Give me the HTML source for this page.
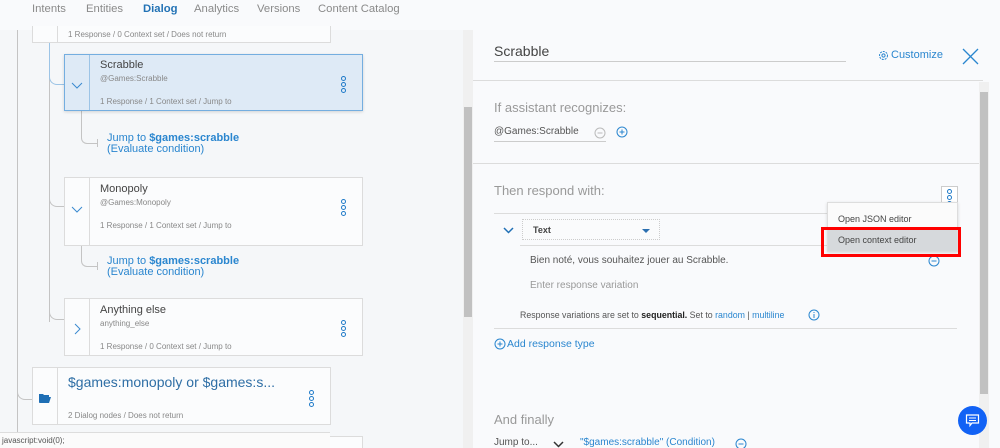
<!DOCTYPE html>
<html style="width:1000px;height:448px;overflow:hidden"><head><meta charset="utf-8"><style>
*{margin:0;padding:0;box-sizing:border-box}
body{width:1000px;height:448px;overflow:hidden;background:#f9fafc;font-family:"Liberation Sans",sans-serif;position:relative;color:#333}
.a{position:absolute;white-space:nowrap}
.tab{position:absolute;top:3px;font-size:11.3px;color:#8a8a8a}
.card{position:absolute;background:#fbfcfd;border:1px solid #dcdcdc}
.card .div{position:absolute;left:24px;top:0;bottom:0;border-left:1px solid #dcdcdc}
.t{position:absolute;left:35px;font-size:11px;color:#444}
.s{position:absolute;left:35px;font-size:8px;color:#888}
.dots{position:absolute;width:6px}
.dots i{display:block;width:5px;height:5px;border:1.3px solid #1f7ac8;border-radius:50%;margin-bottom:1px}
.ln{position:absolute;border-color:#c4c4c4;border-style:solid;border-width:0}
.jump{position:absolute;left:107px;font-size:11px;color:#2a86cf;line-height:11px}
</style></head><body>
<div class="a" style="left:0;top:30px;width:463px;height:418px;background:#f5f7f9"></div>
<div class="a" style="left:463px;top:30px;width:10px;height:418px;background:#f0f0f0"></div>
<div class="a" style="left:464px;top:107px;width:8px;height:210px;background:#c1c1c1"></div>
<div class="a" style="left:0;top:0;width:1000px;height:30px;background:#f9fafc"></div>
<div class="tab" style="left:32px">Intents</div>
<div class="tab" style="left:86px">Entities</div>
<div class="tab" style="left:143px;color:#2272b5;font-weight:bold">Dialog</div>
<div class="tab" style="left:194px">Analytics</div>
<div class="tab" style="left:257px">Versions</div>
<div class="tab" style="left:318px">Content Catalog</div>
<div class="a" style="left:142px;top:28px;width:31px;height:2px;background:#2a86cf"></div>

<div class="ln" style="left:17px;top:30px;height:418px;border-left-width:1px"></div>
<div class="ln" style="left:17px;top:380px;width:15px;height:20px;border-left-width:1px;border-bottom-width:1px;border-bottom-left-radius:8px"></div>
<div class="ln" style="left:49px;top:42px;height:280px;border-left-width:1px"></div>
<div class="ln" style="left:49px;top:42px;width:15px;height:43px;border-left-width:1px;border-bottom-width:1px;border-color:#9cc4e6;border-bottom-left-radius:8px"></div>
<div class="ln" style="left:49px;top:180px;width:15px;height:27px;border-left-width:1px;border-bottom-width:1px;border-bottom-left-radius:8px"></div>
<div class="ln" style="left:49px;top:300px;width:15px;height:20px;border-left-width:1px;border-bottom-width:1px;border-bottom-left-radius:8px"></div>
<div class="ln" style="left:81px;top:111px;width:16px;height:33px;border-left-width:1px;border-bottom-width:1px;border-bottom-left-radius:6px"></div>
<div class="ln" style="left:97px;top:139px;height:8px;border-left-width:1px"></div>
<div class="ln" style="left:81px;top:246px;width:16px;height:21px;border-left-width:1px;border-bottom-width:1px;border-bottom-left-radius:6px"></div>
<div class="ln" style="left:97px;top:262px;height:8px;border-left-width:1px"></div>

<div class="card" style="left:32px;top:26px;width:299px;height:17px;border-top:none"><div class="div"></div><div class="s" style="top:4px">1 Response / 0 Context set / Does not return</div></div>

<div class="card" style="left:64px;top:54px;width:299px;height:57px;background:#deeaf6;border-color:#74aee0;box-shadow:0 1px 3px rgba(0,0,0,.15)"><div class="div" style="border-color:#9cc4e6"></div>
<svg class="a" style="left:6px;top:27px" width="12" height="7"><path d="M1 1l5 5 5-5" stroke="#3a8ad0" fill="none"/></svg>
<div class="t" style="top:4px">Scrabble</div><div class="s" style="top:19px">@Games:Scrabble</div><div class="s" style="top:42px">1 Response / 1 Context set / Jump to</div>
<div class="dots" style="left:276px;top:21px"><i></i><i></i><i></i></div></div>
<div class="jump" style="top:133px">Jump to <b>$games:scrabble</b><br>(Evaluate condition)</div>

<div class="card" style="left:64px;top:177px;width:299px;height:69px"><div class="div"></div>
<svg class="a" style="left:6px;top:28px" width="12" height="7"><path d="M1 1l5 5 5-5" stroke="#3a8ad0" fill="none"/></svg>
<div class="t" style="top:5px">Monopoly</div><div class="s" style="top:20px">@Games:Monopoly</div><div class="s" style="top:43px">1 Response / 1 Context set / Jump to</div>
<div class="dots" style="left:276px;top:21px"><i></i><i></i><i></i></div></div>
<div class="jump" style="top:256px">Jump to <b>$games:scrabble</b><br>(Evaluate condition)</div>

<div class="card" style="left:64px;top:298px;width:299px;height:58px"><div class="div"></div>
<svg class="a" style="left:9px;top:24px" width="7" height="12"><path d="M1 1l5 5-5 5" stroke="#3a8ad0" fill="none"/></svg>
<div class="t" style="top:5px">Anything else</div><div class="s" style="top:20px">anything_else</div><div class="s" style="top:43px">1 Response / 0 Context set / Jump to</div>
<div class="dots" style="left:276px;top:21px"><i></i><i></i><i></i></div></div>

<div class="card" style="left:32px;top:367px;width:299px;height:58px"><div class="div"></div>
<svg class="a" style="left:6px;top:25px" width="12" height="10"><path d="M0 1h4l1 1h5v2H3L1 9H0z M2 4h10l-2 6H0z" fill="#1f6fb5"/></svg>
<div class="a" style="left:35px;top:6px;font-size:14px;color:#2e6ea5">$games:monopoly or $games:s...</div>
<div class="s" style="top:43px">2 Dialog nodes / Does not return</div>
<div class="dots" style="left:276px;top:22px"><i></i><i></i><i></i></div></div>
<div class="card" style="left:64px;top:436px;width:299px;height:12px;border-bottom:none"></div>
<div class="a" style="left:0;top:432px;width:330px;height:16px;background:#fbfbfb;border-top:1px solid #ddd;font-size:8px;color:#555;padding:3px 2px">javascript:void(0);</div>

<div class="a" style="left:473px;top:30px;width:527px;height:418px;background:#f9fafc"></div>
<div class="a" style="left:494px;top:43px;font-size:14px;color:#444">Scrabble</div>
<div class="a" style="left:494px;top:61px;width:352px;height:1px;background:#ccc"></div>
<svg class="a" style="left:878px;top:50px" width="11" height="11" viewBox="0 0 11 11"><circle cx="5.5" cy="5.5" r="4" fill="none" stroke="#2a86cf" stroke-width="1" stroke-dasharray="2 1"/><circle cx="5.5" cy="5.5" r="1.6" fill="none" stroke="#2a86cf"/></svg>
<div class="a" style="left:891px;top:49px;font-size:11px;color:#2a86cf">Customize</div>
<svg class="a" style="left:962px;top:48px" width="17" height="17"><path d="M1 1L16 16M16 1L1 16" stroke="#2a86cf" stroke-width="1.3"/></svg>
<div class="a" style="left:473px;top:80px;width:510px;height:1px;background:#dcdcdc"></div>
<div class="a" style="left:979px;top:82px;width:10px;height:366px;background:#f0f0f0"></div>
<div class="a" style="left:980px;top:92px;width:8px;height:302px;background:#c1c1c1"></div>

<div class="a" style="left:494px;top:100px;font-size:13px;color:#999">If assistant recognizes:</div>
<div class="a" style="left:494px;top:126px;font-size:10px;color:#555">@Games:Scrabble</div>
<div class="a" style="left:494px;top:141px;width:112px;height:1px;background:#ccc"></div>
<svg class="a" style="left:594px;top:127px" width="12" height="12"><circle cx="6" cy="6" r="5" fill="none" stroke="#bbb"/><path d="M3.5 6h5" stroke="#bbb"/></svg>
<svg class="a" style="left:616px;top:126px" width="12" height="12"><circle cx="6" cy="6" r="5" fill="none" stroke="#2a86cf"/><path d="M3.5 6h5M6 3.5v5" stroke="#2a86cf"/></svg>
<div class="a" style="left:473px;top:163px;width:506px;height:1px;background:#dcdcdc"></div>

<div class="a" style="left:494px;top:183px;font-size:13px;color:#999">Then respond with:</div>
<div class="a" style="left:941px;top:186px;width:17px;height:17px;border:1px solid #ccc;background:#fff"><div class="dots" style="left:5px;top:2px"><i></i><i></i><i></i></div></div>
<div class="a" style="left:494px;top:213px;width:463px;height:1px;background:#dcdcdc"></div>
<svg class="a" style="left:503px;top:227px" width="11" height="7"><path d="M1 1l4.5 4.5L10 1" stroke="#1f6fb5" stroke-width="1.5" fill="none"/></svg>
<div class="a" style="left:522px;top:219px;width:138px;height:21px;border:1px dotted #ccc;background:#fafbfc"></div>
<div class="a" style="left:533px;top:225px;font-size:9px;font-weight:bold;color:#444">Text</div>
<div class="a" style="left:642px;top:229px;width:0;height:0;border-left:4px solid transparent;border-right:4px solid transparent;border-top:4px solid #2a6fb0"></div>
<div class="a" style="left:520px;top:245px;width:437px;height:1px;background:#dcdcdc"></div>
<div class="a" style="left:530px;top:255px;font-size:10px;color:#555">Bien noté, vous souhaitez jouer au Scrabble.</div>
<svg class="a" style="left:928px;top:255px" width="12" height="12"><circle cx="6" cy="6" r="5" fill="none" stroke="#2a86cf"/><path d="M3.5 6h5" stroke="#2a86cf"/></svg>
<div class="a" style="left:530px;top:280px;font-size:10px;color:#999">Enter response variation</div>
<div class="a" style="left:520px;top:310px;font-size:8.8px;color:#555">Response variations are set to <b style="color:#222">sequential.</b> Set to <span style="color:#2a86cf">random</span> | <span style="color:#2a86cf">multiline</span></div>
<svg class="a" style="left:808px;top:309px" width="12" height="12"><circle cx="6" cy="6" r="5" fill="none" stroke="#2a86cf"/><path d="M6 5v4M6 3v1" stroke="#2a86cf"/></svg>
<div class="a" style="left:494px;top:328px;width:463px;height:1px;background:#dcdcdc"></div>
<svg class="a" style="left:494px;top:338px" width="12" height="12"><circle cx="6" cy="6" r="5" fill="none" stroke="#2a86cf"/><path d="M3.5 6h5M6 3.5v5" stroke="#2a86cf"/></svg>
<div class="a" style="left:507px;top:338px;font-size:10.5px;color:#2a86cf">Add response type</div>

<div class="a" style="left:827px;top:202px;width:131px;height:50px;background:#fbfbfb;border:1px solid #ddd;box-shadow:0 1px 3px rgba(0,0,0,.15)"></div>
<div class="a" style="left:838px;top:214px;font-size:9px;color:#444">Open JSON editor</div>
<div class="a" style="left:828px;top:230px;width:129px;height:21px;background:#d6d9dc"></div>
<div class="a" style="left:838px;top:235px;font-size:9px;color:#444">Open context editor</div>
<div class="a" style="left:821px;top:227px;width:140px;height:30px;border:3px solid #f00"></div>

<div class="a" style="left:494px;top:412px;font-size:13px;color:#999">And finally</div>
<div class="a" style="left:494px;top:437px;font-size:10px;color:#555">Jump to...</div>
<svg class="a" style="left:553px;top:441px" width="11" height="7"><path d="M1 1l4.5 4.5L10 1" stroke="#333" stroke-width="1.5" fill="none"/></svg>
<div class="a" style="left:580px;top:437px;font-size:10px;color:#2a86cf">"$games:scrabble" (Condition)</div>
<svg class="a" style="left:735px;top:438px" width="12" height="12"><circle cx="6" cy="6" r="5" fill="none" stroke="#2a86cf"/><path d="M3.5 6h5" stroke="#2a86cf"/></svg>
<div class="a" style="left:958px;top:406px;width:29px;height:29px;border-radius:50%;background:#1262f5"></div>
<svg class="a" style="left:965px;top:413px" width="15" height="15"><path d="M1.5 2h12v8H7l-2 2.5V10H1.5z" fill="none" stroke="#fff" stroke-width="1.2"/><path d="M4 5h7M4 7.5h7" stroke="#fff"/></svg>
</body></html>
